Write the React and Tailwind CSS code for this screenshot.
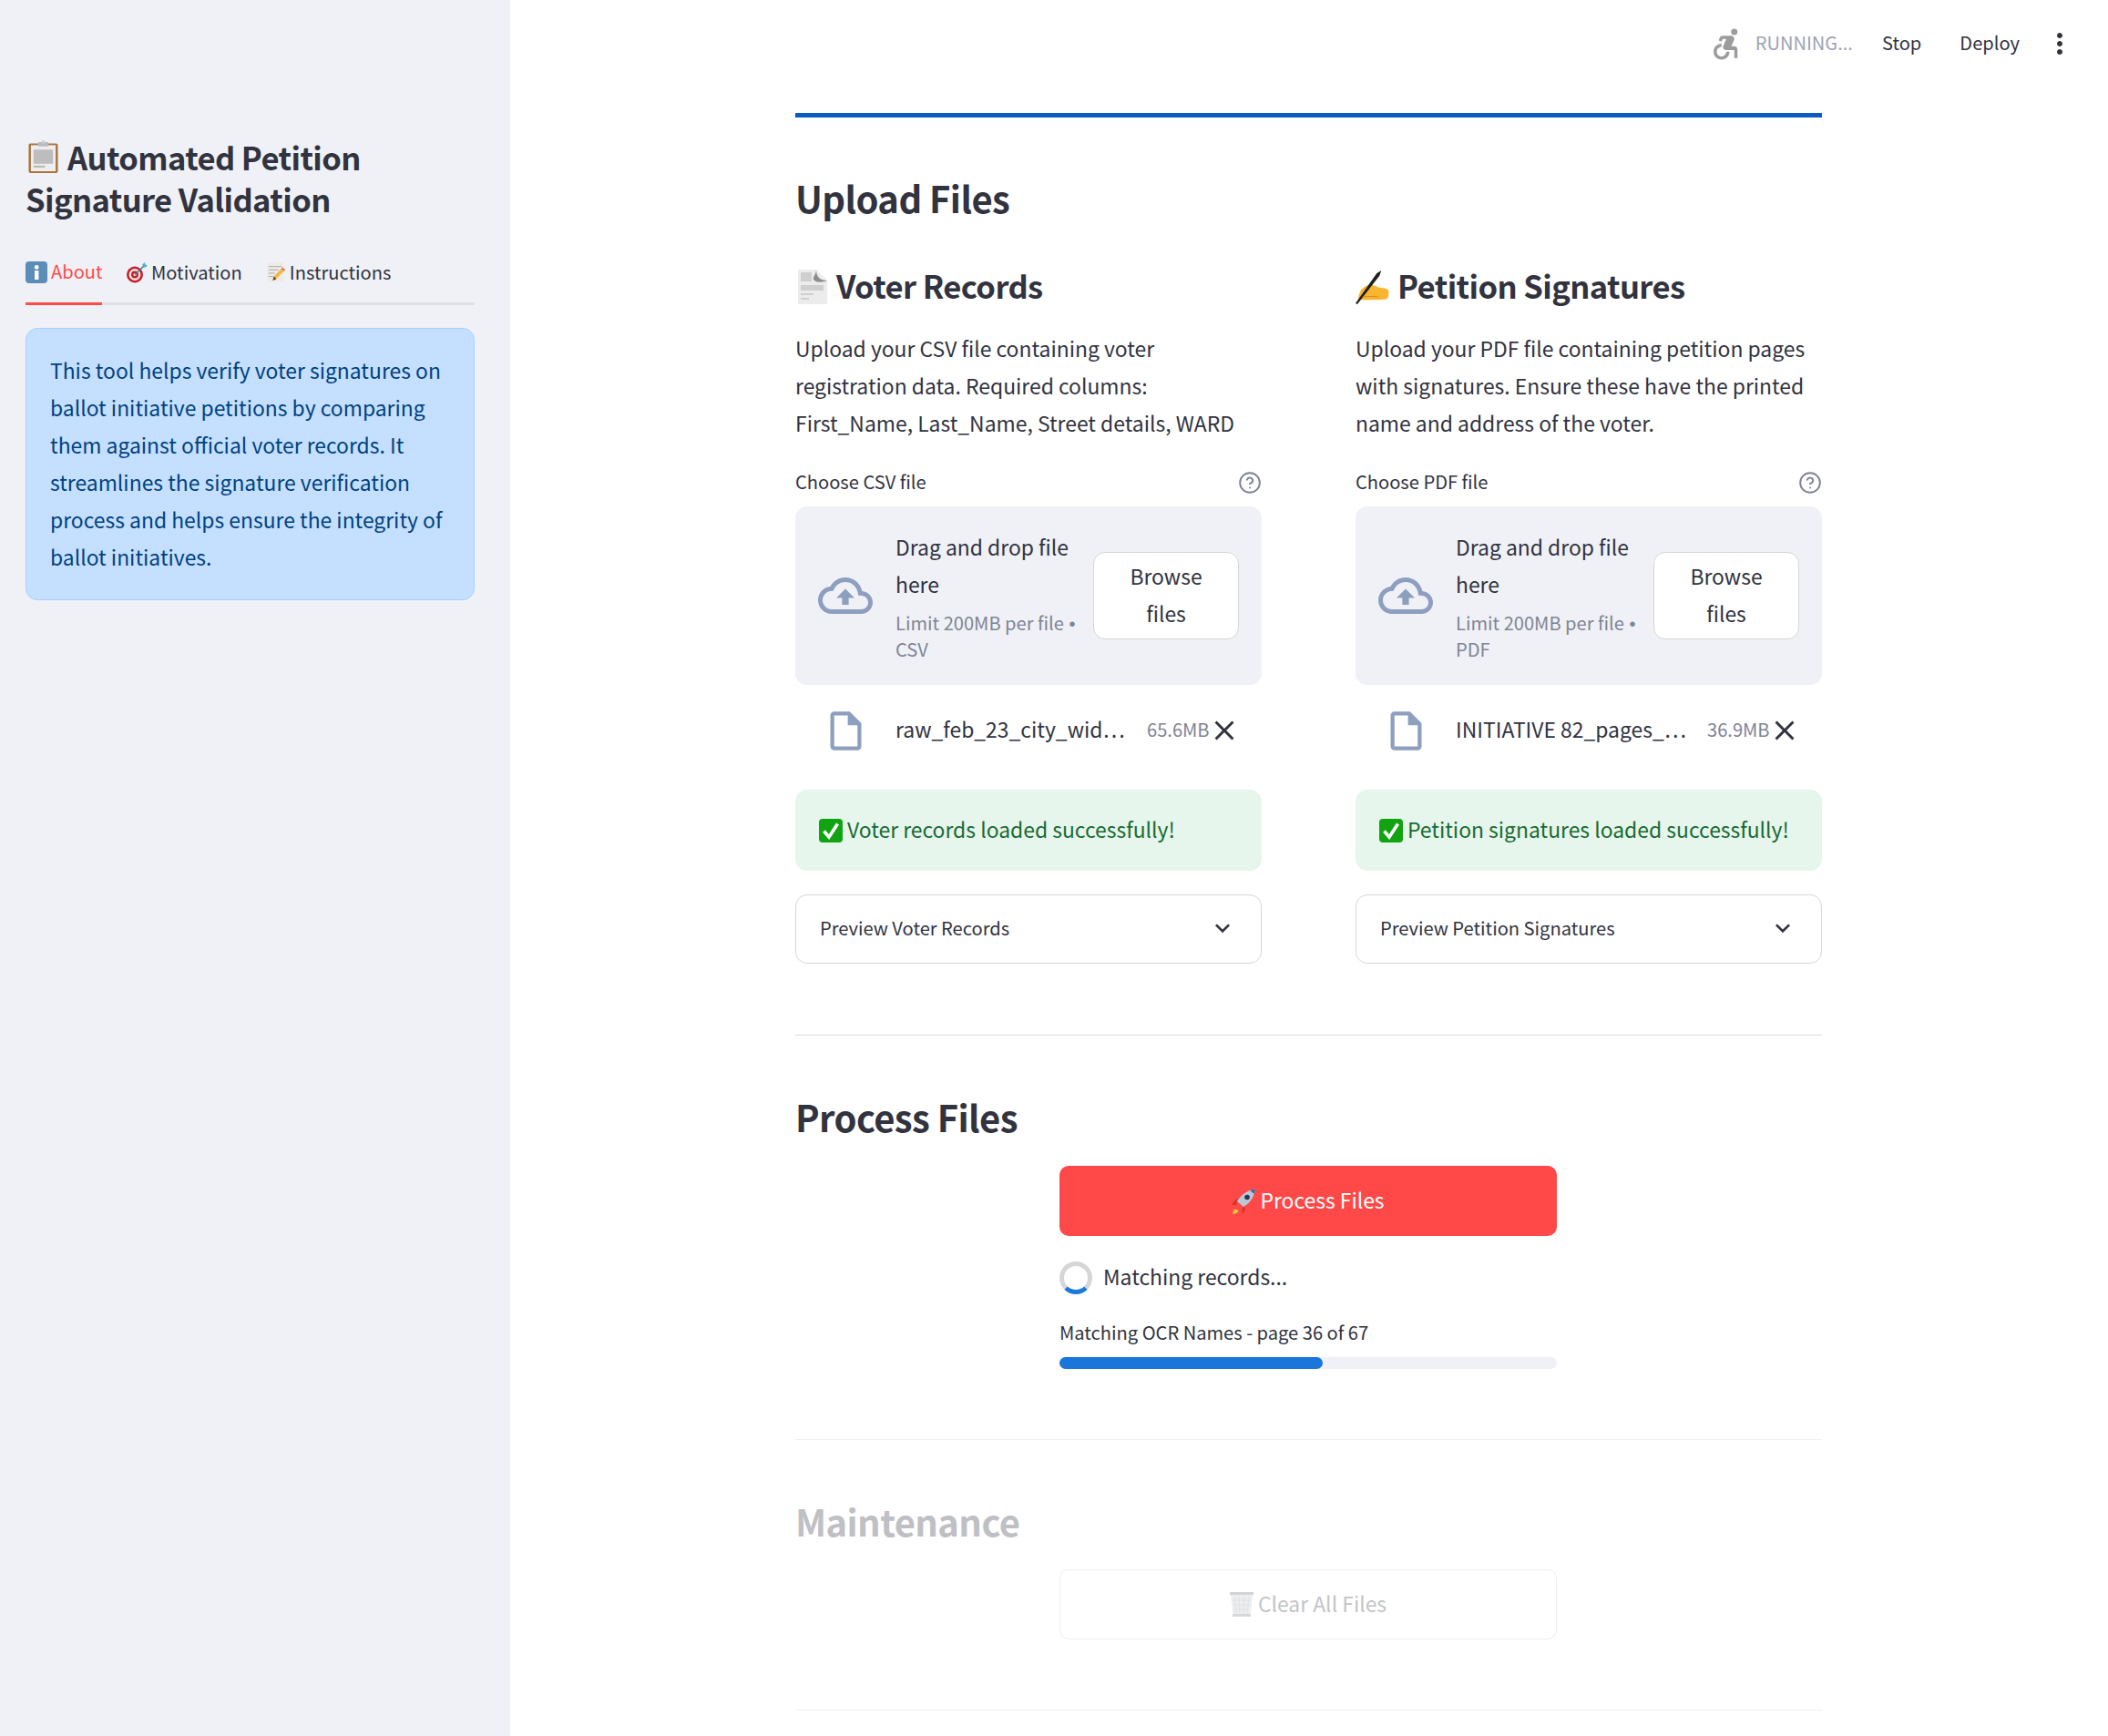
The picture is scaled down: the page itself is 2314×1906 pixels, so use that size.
import React from "react";
import { MdAccessibleForward, MdMoreVert, MdExpandMore } from "react-icons/md";
import { CircleHelp } from "lucide-react";

const Clipboard = () => (
  <svg viewBox="0 0 34 38" className="w-[33px] h-[38px] ml-[3px] mr-[10px] shrink-0">
    <rect x="0.5" y="4" width="33" height="33.5" rx="2" fill="#a8743c" />
    <rect x="3" y="6" width="28" height="29.5" fill="#eeeeee" />
    <g fill="#bdbdbd"><rect x="6" y="11" width="22" height="16" /><rect x="6" y="29" width="13" height="2.5" /></g>
    <rect x="11" y="2.5" width="12" height="5" rx="1" fill="#b8bcc2" />
    <circle cx="17" cy="2.5" r="2" fill="#c9ccd1" />
  </svg>
);
const Info = () => (
  <svg viewBox="0 0 24 24" className="w-[24px] h-[24px] mr-[4px] shrink-0">
    <rect width="24" height="24" rx="4" fill="#5b8db8" />
    <rect x="10" y="10" width="4.4" height="10" fill="#fff" />
    <circle cx="12.2" cy="6.4" r="2.4" fill="#fff" />
  </svg>
);
const Target = () => (
  <svg viewBox="0 0 24 24" className="w-[24px] h-[24px] mr-[4px] shrink-0">
    <circle cx="10" cy="14.5" r="9" fill="#c81e2a" />
    <circle cx="10" cy="14.5" r="6.4" fill="#f3e9e4" />
    <circle cx="10" cy="14.5" r="4" fill="#c81e2a" />
    <circle cx="10" cy="14.5" r="1.6" fill="#f3e9e4" />
    <path d="M10 14.5 20 5" stroke="#3e7f8d" strokeWidth="1.6" />
    <path d="M18 3.5 21 1l.6 2.6L24 4.5l-3 2.5z" fill="#4fb3c4" />
  </svg>
);
const Memo = () => (
  <svg viewBox="0 0 22 24" className="w-[20px] h-[24px] mr-[5px] shrink-0">
    <rect width="20" height="23" y="0.5" fill="#ecebe6" />
    <g stroke="#a9a9a9" strokeWidth="1"><path d="M2 5h16M2 9h12M2 13h8M2 17h6" /></g>
    <path d="M7 22l1.5-5L19 6l3 3L11 20z" fill="#f4b63f" />
    <path d="M19 6l3 3-1.6 1.6-3-3z" fill="#e8697a" />
    <path d="M7 22l1.5-5 3 3z" fill="#5a3b2a" />
  </svg>
);
const PageFacing = () => (
  <svg viewBox="0 0 32 38" className="w-[32px] h-[38px] ml-[3px] mr-[10px] shrink-0">
    <path d="M0 0h20l12 12v26H0z" fill="#ececec" />
    <path d="M20 0c0 8 4 12 12 12-4 2-12 3-15-1-1-3 3-6 3-11z" fill="#8d8d8d" />
    <g fill="#cfcfcf"><rect x="3" y="3" width="12" height="10" /><rect x="3" y="17" width="25" height="6" /><rect x="3" y="26" width="14" height="2" /><rect x="3" y="31" width="9" height="2" /></g>
  </svg>
);
const Writing = () => (
  <svg viewBox="0 0 38 38" className="w-[37px] h-[37px] mr-[9px] shrink-0">
    <path d="M6 22c4-4 7-5 10-6 4 0 7 2 10 3 5 1 9 1 11 3 1 4 0 9-2 10-4 1-10 1-15 1-6 0-13 0-17 0 0-3 1-7 3-11z" fill="#f7b531" />
    <path d="M0 37 24 3l5-3-2 6L2 38z" fill="#1f1f1f" />
    <path d="M8 30c6-1 12-1 18 0" stroke="#d78d1f" strokeWidth="1" fill="none" />
  </svg>
);
const Check = () => (
  <svg viewBox="0 0 26 26" className="w-[26px] h-[26px] mr-[5px] shrink-0">
    <rect width="26" height="26" rx="4" fill="#12a312" />
    <path d="M5.500 13.500 11 20 20.500 5.500" stroke="#fff" strokeWidth="3.600" fill="none" />
  </svg>
);
const Rocket = () => (
  <svg viewBox="0 0 26 28" className="w-[26px] h-[28px] mr-[5px] shrink-0">
    <path d="M7 11 3 13l-3 5 5 0z" fill="#d5362a" />
    <path d="M14 19l1 4-3 5-1-5z" fill="#d5362a" />
    <path d="M4 22c-2 2-3 4-3 6 3 0 5-2 7-3z" fill="#f8c63d" />
    <path d="M6 14C10 7 17 2 26 0c-1 9-6 16-13 20z" fill="#b9c8d8" />
    <path d="M20 2l6-2-1 6z" fill="#4b6a8a" />
    <circle cx="17" cy="9.500" r="2.800" fill="#26384d" />
  </svg>
);
const Trash = () => (
  <svg viewBox="0 0 26 27" className="w-[26px] h-[27px] mr-[5px] shrink-0" opacity="0.4">
    <path d="M1 2h24l-2.500 24h-19z" fill="#d2d5d9" />
    <path d="M5 5l2 19M10 5l1 19M16 5l-1 19M21 5l-2 19M3 9h20M4 14h18M4 19h17" stroke="#a9adb3" strokeWidth="0.7" />
    <rect x="0" y="0" width="26" height="3" fill="#8f959c" />
    <rect x="3" y="24" width="20" height="3" fill="#9aa0a6" />
  </svg>
);
const Cloud = () => (
  <svg viewBox="0 0 24 24" className="w-[60px] h-[60px]" fill="#8d9fbf">
    <path d="M19.35 10.04C18.67 6.59 15.64 4 12 4 9.11 4 6.6 5.64 5.35 8.04 2.34 8.36 0 10.91 0 14c0 3.31 2.69 6 6 6h13c2.76 0 5-2.24 5-5 0-2.64-2.05-4.78-4.65-4.96zM19 18H6c-2.21 0-4-1.79-4-4 0-2.05 1.53-3.76 3.56-3.97l1.07-.11.5-.95C8.08 7.14 9.94 6 12 6c2.62 0 4.88 1.86 5.39 4.43l.3 1.5 1.53.11c1.56.1 2.78 1.41 2.78 2.96 0 1.65-1.35 3-3 3zM8 13h2.55v3h2.9v-3H16l-4-4z" />
  </svg>
);
const FileIcon = () => (
  <svg viewBox="0 0 24 24" className="w-[51px] h-[51px]" fill="#8d9fbf">
    <path d="M14 2H6c-1.100 0-1.990.9-1.990 2L4 20c0 1.100.89 2 1.990 2H18c1.100 0 2-.9 2-2V8l-6-6zM6 20V4h7v5h5v11H6z" />
  </svg>
);
const Close = () => (
  <svg viewBox="0 0 24 24" className="w-[36px] h-[36px] shrink-0 ml-[-3px]" fill="#31333f">
    <path d="M19 6.410 17.590 5 12 10.590 6.410 5 5 6.410 10.590 12 5 17.590 6.410 19 12 13.410 17.590 19 19 17.590 13.410 12z" />
  </svg>
);

function Column({ emoji, title, lines, label, kind, file, size, success, preview }) {
  return (
    <div className="min-w-0">
      <h3 className="flex items-center h-[50px] mt-[41px] text-[34.6px] font-bold text-[#31333f] whitespace-nowrap tracking-[-0.6px]">
        {emoji}<span className="mb-[3px]">{title}</span>
      </h3>
      <p className="mt-[22px] text-[22.9px] leading-[41px] text-[#31333f]">
        {lines.map((l) => (<span key={l} className="block whitespace-nowrap">{l}</span>))}
      </p>
      <div className="mt-[31px] h-[28px] flex items-center justify-between text-[20.1px] text-[#31333f]">
        <span className="mb-[1px]">{label}</span>
        <CircleHelp className="w-[26px] h-[26px] mr-[0px] text-[#808495]" strokeWidth={1.8} />
      </div>
      <div className="mt-[12px] h-[196px] rounded-[13px] bg-[#eff1f6] flex items-center pl-[25px] pr-[25px]">
        <div className="w-[60px] shrink-0"><Cloud /></div>
        <div className="ml-[25px] w-[205px] shrink-0 mb-[1px]">
          <div className="text-[22.9px] leading-[41px] text-[#31333f]">Drag and drop file<br />here</div>
          <div className="mt-[8px] text-[20.1px] leading-[28px] text-[#808495] whitespace-nowrap">Limit 200MB per file<span className="font-['Liberation_Sans']"> •</span><br />{kind}</div>
        </div>
        <button className="ml-auto w-[160px] h-[96px] rounded-[13px] bg-white border border-[#d5d6da] text-[22.9px] leading-[41px] text-[#31333f] pb-[3px]">Browse<br />files</button>
      </div>
      <div className="mt-[26px] h-[48px] flex items-center">
        <div className="w-[51px] ml-[30px] shrink-0"><FileIcon /></div>
        <span className="ml-[29px] w-[276px] text-[22.9px] text-[#31333f] whitespace-nowrap mb-[4px]">{file}</span>
        <span className="text-[20.1px] text-[#808495] w-[70px] mb-[2px]">{size}</span>
        <Close />
      </div>
      <div className="mt-[41px] h-[89px] rounded-[13px] bg-[#e7f6ec] flex items-center pl-[26px] text-[22.9px] text-[#176b33] whitespace-nowrap">
        <Check /><span className="mb-[2px]">{success}</span>
      </div>
      <div className="mt-[26px] h-[76px] rounded-[13px] border border-[#d6d6d9] flex items-center justify-between pl-[26px] pr-[26px] text-[20.1px] text-[#31333f]">
        <span className="mb-[2px]">{preview}</span>
        <MdExpandMore className="w-[32px] h-[32px] mb-[2px]" />
      </div>
    </div>
  );
}

export default function App() {
  return (
    <div className="flex w-[2314px] h-[1906px] overflow-hidden bg-white font-['Noto_Sans_CJK_SC','Source_Sans_Pro',sans-serif]">
      <aside className="w-[560px] shrink-0 bg-[#eff1f6] pl-[28px] pr-[39px]">
        <h1 className="mt-[149px] text-[34.6px] leading-[46px] font-bold text-[#31333f] tracking-[-0.6px]">
          <span className="flex items-center h-[46px] whitespace-nowrap"><Clipboard />Automated Petition</span>
          <span className="block whitespace-nowrap">Signature Validation</span>
        </h1>
        <div className="mt-[29px] h-[65px] flex border-b-[3px] border-[#dfe0e3] text-[20.1px] text-[#31333f]">
          <div className="flex items-center h-[65px] pb-[5px] w-[84px] border-b-[3px] border-[#ff4b4b] text-[#ff4b4b] whitespace-nowrap"><Info />About</div>
          <div className="flex items-center h-[62px] pb-[4px] ml-[26px] whitespace-nowrap"><Target />Motivation</div>
          <div className="flex items-center h-[62px] pb-[4px] ml-[27px] whitespace-nowrap"><Memo />Instructions</div>
        </div>
        <div className="mt-[25px] h-[299px] rounded-[13px] bg-[#c4dfff] border border-[#a8d0ff] pl-[26px] pt-[25px] text-[22.9px] leading-[41px] text-[#004280]">
          {["This tool helps verify voter signatures on", "ballot initiative petitions by comparing", "them against official voter records. It", "streamlines the signature verification", "process and helps ensure the integrity of", "ballot initiatives."].map((l) => (
            <span key={l} className="block whitespace-nowrap">{l}</span>
          ))}
        </div>
      </aside>
      <main className="flex-1 min-w-0">
        <header className="h-[96px] flex items-center justify-end pr-[35px] text-[20.1px] text-[#31333f]">
          <MdAccessibleForward className="w-[42px] h-[42px] text-[#9c9c9c]" />
          <span className="ml-[11px] mb-[2px] text-[#9ca3b5] whitespace-nowrap">RUNNING...</span>
          <span className="ml-[32px] mb-[2px]">Stop</span>
          <span className="ml-[42px] mb-[2px]">Deploy</span>
          <MdMoreVert className="ml-[26px] w-[36px] h-[36px]" />
        </header>
        <div className="ml-[313px] w-[1127px] mt-[28px]">
          <div className="h-[5px] bg-[#0a5cc4]" />
          <h2 className="mt-[59px] mb-[3px] h-[58px] leading-[58px] text-[40px] font-bold text-[#31333f] tracking-[-0.6px]">Upload Files</h2>
          <div className="grid grid-cols-2 gap-x-[103px]">
            <Column emoji={<PageFacing />} title="Voter Records" lines={["Upload your CSV file containing voter", "registration data. Required columns:", "First_Name, Last_Name, Street details, WARD"]} label="Choose CSV file" kind="CSV" file="raw_feb_23_city_wid…" size="65.6MB" success="Voter records loaded successfully!" preview="Preview Voter Records" />
            <Column emoji={<Writing />} title="Petition Signatures" lines={["Upload your PDF file containing petition pages", "with signatures. Ensure these have the printed", "name and address of the voter."]} label="Choose PDF file" kind="PDF" file="INITIATIVE 82_pages_…" size="36.9MB" success="Petition signatures loaded successfully!" preview="Preview Petition Signatures" />
          </div>
          <div className="mt-[78px] h-px bg-[#dcdcdf]" />
          <h2 className="mt-[60px] h-[58px] leading-[58px] text-[40px] font-bold text-[#31333f] tracking-[-0.6px]">Process Files</h2>
          <div className="w-[546px] ml-[290px]">
            <button className="mt-[25px] w-full h-[77px] rounded-[10px] bg-[#ff4848] text-white text-[22.9px] flex items-center justify-center"><Rocket /><span className="mb-[3px]">Process Files</span></button>
            <div className="mt-[28px] h-[36px] flex items-center text-[22.9px] text-[#31333f]">
              <span className="w-[36px] h-[36px] rounded-full border-[5px] border-[#d5d6d8] border-b-[#1c7ada] shrink-0" />
              <span className="ml-[12px] mb-[3px]">Matching records...</span>
            </div>
            <div className="mt-[28px] h-[28px] leading-[28px] text-[20.1px] text-[#31333f]">Matching OCR Names - page 36 of 67</div>
            <div className="mt-[13px] h-[13px] rounded-full bg-[#eff1f6]">
              <div className="h-full w-[289px] rounded-full bg-[#1a76da]" />
            </div>
          </div>
          <div className="mt-[77px] h-px bg-[#f0f0f1]" />
          <h2 className="mt-[60px] h-[58px] leading-[58px] text-[40px] font-bold text-[#bfc0c4] tracking-[-0.6px]">Maintenance</h2>
          <div className="w-[546px] ml-[290px]">
            <button className="mt-[24px] w-full h-[77px] rounded-[10px] bg-white border border-[#eeeeef] text-[#c3c4c7] text-[22.9px] flex items-center justify-center"><Trash /><span className="mb-[2px]">Clear All Files</span></button>
          </div>
          <div className="mt-[77px] h-px bg-[#f0f0f1]" />
        </div>
      </main>
    </div>
  );
}
